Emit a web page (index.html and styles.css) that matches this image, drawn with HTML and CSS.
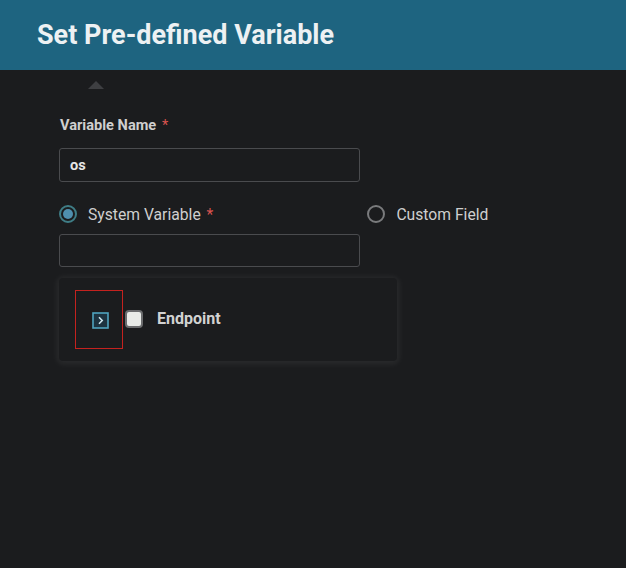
FILE: index.html
```html
<!DOCTYPE html>
<html>
<head>
<meta charset="utf-8">
<link rel="stylesheet" href="styles.css">
</head>
<body>
<header class="header">
  <h1 class="title">Set Pre-defined Variable</h1>
</header>
<div class="caret"></div>
<main class="form">
  <label class="label">Variable Name <span class="req">*</span></label>
  <div class="input"><span class="value">os</span></div>
  <div class="radios">
    <div class="radio-item">
      <span class="radio checked"><span class="dot"></span></span>
      <span class="radio-text">System Variable <span class="req">*</span></span>
    </div>
    <div class="radio-item custom">
      <span class="radio"></span>
      <span class="radio-text">Custom Field</span>
    </div>
  </div>
  <div class="input empty"></div>
  <div class="card">
    <div class="expander">
      <svg class="expand-icon" width="17" height="17" viewBox="0 0 17 17">
        <rect x="1" y="1" width="15" height="15" fill="#1d3340" stroke="#4fa3bf" stroke-width="1.6"/>
        <path d="M7 5.3 L10.2 8.5 L7 11.7" fill="none" stroke="#cfe6ee" stroke-width="1.6"/>
      </svg>
    </div>
    <span class="checkbox"></span>
    <span class="item-text">Endpoint</span>
  </div>
</main>
</body>
</html>
```
FILE: styles.css
```css
html, body {
  margin: 0;
  padding: 0;
}
body {
  width: 626px;
  height: 568px;
  background: #1b1c1e;
  font-family: Roboto, "Noto Sans", sans-serif;
  color: #d4d4d4;
  overflow: hidden;
}
.header {
  height: 70px;
  background: #1e6480;
  display: flex;
  align-items: center;
  padding-left: 37px;
  box-sizing: border-box;
}
.title {
  margin: 0;
  font-size: 27px;
  font-weight: 700;
  color: #edf1f3;
  letter-spacing: 0;
  padding-bottom: 1px;
}
.caret {
  width: 0;
  height: 0;
  margin-left: 88px;
  margin-top: 11px;
  border-left: 8px solid transparent;
  border-right: 8px solid transparent;
  border-bottom: 8px solid #3e3f42;
}
.form {
  padding-left: 59px;
  padding-top: 27px;
}
.label {
  display: block;
  font-size: 14.6px;
  font-weight: 700;
  color: #cfcfcf;
  padding-left: 1px;
  line-height: 18px;
}
.req {
  color: #d9534f;
  font-weight: 400;
  margin-left: 2px;
}
.input {
  width: 301px;
  height: 34px;
  box-sizing: border-box;
  border: 1px solid #4a4b4e;
  border-radius: 3px;
  margin-top: 14px;
  display: flex;
  align-items: center;
  padding-left: 10px;
}
.value {
  font-size: 14.6px;
  font-weight: 700;
  color: #e6e6e6;
}
.radios {
  display: flex;
  margin-top: 21px;
  height: 22px;
  align-items: center;
}
.radio-item {
  display: flex;
  align-items: center;
}
.radio-item.custom {
  margin-left: 154px;
}
.radio {
  width: 18px;
  height: 18px;
  box-sizing: border-box;
  border: 2px solid #7a7b7d;
  border-radius: 50%;
  display: flex;
  align-items: center;
  justify-content: center;
  margin-right: 11px;
}
.radio.checked {
  border-color: #3f7d86;
}
.dot {
  width: 10px;
  height: 10px;
  border-radius: 50%;
  background: #4f8fae;
}
.radio-text {
  font-size: 15.7px;
  color: #cfcfcf;
}
.input.empty {
  margin-top: 9px;
  height: 33px;
}
.card {
  width: 338px;
  height: 83px;
  box-sizing: border-box;
  margin-top: 11px;
  background: #1b1c1e;
  border-radius: 4px;
  box-shadow: 0 1px 6px 2px rgba(255, 255, 255, 0.07);
  display: flex;
  align-items: center;
  padding-left: 16px;
}
.expander {
  width: 48px;
  height: 59px;
  box-sizing: border-box;
  border: 1px solid #c4221f;
  display: flex;
  align-items: center;
  justify-content: center;
  margin-top: -1px;
}
.expand-icon {
  display: block;
  margin-left: 3px;
  margin-top: 2px;
}
.checkbox {
  width: 18px;
  height: 18px;
  box-sizing: border-box;
  border: 2px solid #6b6c6e;
  border-radius: 4px;
  background: #e9ebe8;
  margin-left: 2px;
  margin-bottom: 1px;
}
.item-text {
  margin-left: 14px;
  font-size: 16px;
  font-weight: 700;
  color: #d2d2d2;
  margin-bottom: 3px;
}
```
